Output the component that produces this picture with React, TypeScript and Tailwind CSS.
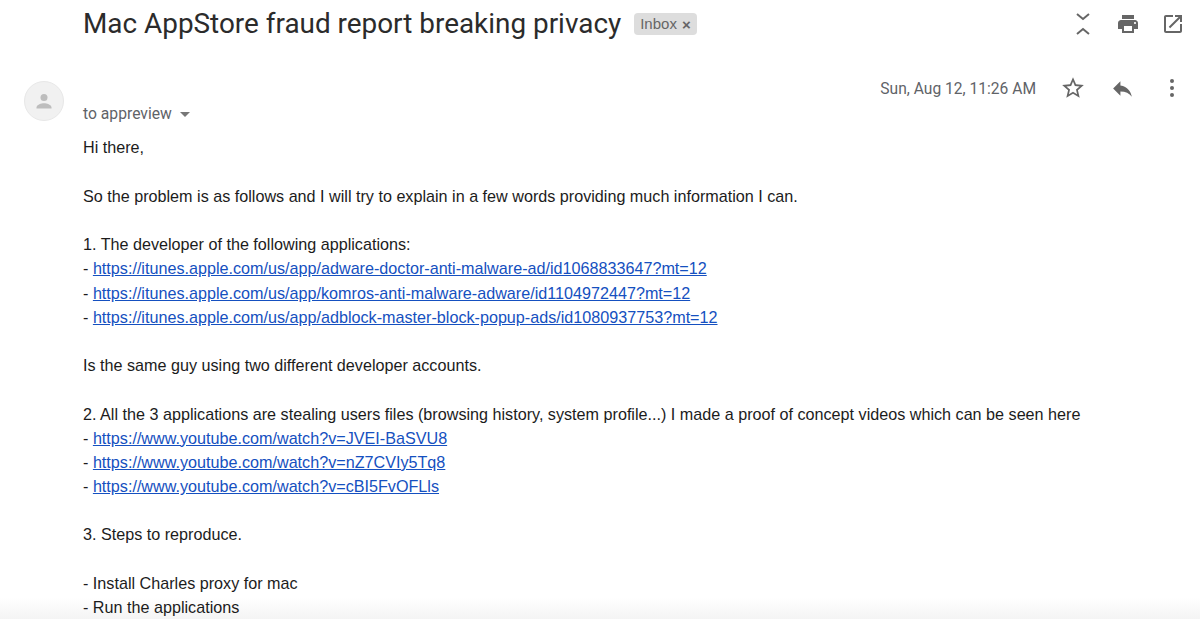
const bodyLines = [
  { text: 'Hi there,' },
  {},
  { text: 'So the problem is as follows and I will try to explain in a few words providing much information I can.' },
  {},
  { text: '1. The developer of the following applications:' },
  { link: 'https://itunes.apple.com/us/app/adware-doctor-anti-malware-ad/id1068833647?mt=12' },
  { link: 'https://itunes.apple.com/us/app/komros-anti-malware-adware/id1104972447?mt=12' },
  { link: 'https://itunes.apple.com/us/app/adblock-master-block-popup-ads/id1080937753?mt=12' },
  {},
  { text: 'Is the same guy using two different developer accounts.' },
  {},
  { text: '2. All the 3 applications are stealing users files (browsing history, system profile...) I made a proof of concept videos which can be seen here' },
  { link: 'https://www.youtube.com/watch?v=JVEI-BaSVU8' },
  { link: 'https://www.youtube.com/watch?v=nZ7CVIy5Tq8' },
  { link: 'https://www.youtube.com/watch?v=cBI5FvOFLls' },
  {},
  { text: '3. Steps to reproduce.' },
  {},
  { text: '- Install Charles proxy for mac' },
  { text: '- Run the applications' },
];

export default function App() {
  return (
    <div className="relative w-[1200px] h-[619px] overflow-hidden bg-white font-['Liberation_Sans',sans-serif] text-[#1c1c1c]">
      {/* fade at the bottom of the window, sits under the text */}
      <div className="absolute left-0 right-0 bottom-0 h-[22px] bg-gradient-to-b from-white to-[#f4f4f4]" />

      {/* subject row */}
      <div className="relative flex items-center h-[47px] pl-[83px] pr-[15px]">
        <h1 className="font-['Roboto',sans-serif] font-normal text-[27.9px] leading-[47px] text-[#2b2b2b]">
          Mac AppStore fraud report breaking privacy
        </h1>
        <span className="ml-[13px] mt-[1px] flex items-center h-[22px] px-[6px] rounded-[4px] bg-[#dddddd] text-[#666666] text-[15px]">
          Inbox
          <span className="ml-[5px] text-[15px] font-bold leading-none">×</span>
        </span>
        <div className="ml-auto flex items-center">
          <svg width="20" height="24" viewBox="0 0 20 24" fill="none" stroke="#666" strokeWidth="2" className="mr-[23px]">
            <path d="M4 2l6 5 6-5M4 22l6-5 6 5" />
          </svg>
          <svg width="24" height="24" viewBox="0 0 24 24" fill="#666" className="mr-[21px]">
            <path d="M19 8H5c-1.66 0-3 1.34-3 3v6h4v4h12v-4h4v-6c0-1.66-1.34-3-3-3zm-3 11H8v-5h8v5zm3-7c-.55 0-1-.45-1-1s.45-1 1-1 1 .45 1 1-.45 1-1 1zm-1-9H6v4h12V3z" />
          </svg>
          <svg width="24" height="24" viewBox="0 0 24 24" fill="#666">
            <path d="M19 19H5V5h7V3H5c-1.11 0-2 .9-2 2v14c0 1.1.89 2 2 2h14c1.1 0 2-.9 2-2v-7h-2v7zM14 3v2h3.59l-9.83 9.83 1.41 1.41L19 6.41V10h2V3h-7z" />
          </svg>
        </div>
      </div>

      {/* message */}
      <div className="relative flex pl-[24px] pt-[34px]">
        <div className="flex items-center justify-center w-[40px] h-[40px] rounded-full bg-[#f1f1f1] border border-[#e8e8e8] shrink-0">
          <svg width="24" height="24" viewBox="0 0 24 24" fill="#bdbdbd">
            <circle cx="12" cy="8.5" r="3.5" />
            <path d="M4.5 18.5c0-2.8 5-4.2 7.5-4.2s7.5 1.4 7.5 4.2v1h-15z" />
          </svg>
        </div>
        <div className="flex-1 ml-[19px]">
          <div className="flex items-center h-[14px] pr-[15px]">
            <div className="ml-auto flex items-center">
              <span className="font-['Roboto',sans-serif] text-[15.6px] text-[#5f6368] mr-[24px] mt-[4px]">Sun, Aug 12, 11:26 AM</span>
              <svg width="26" height="26" viewBox="0 0 24 24" fill="#666" className="mr-[24px]">
                <path d="M22 9.24l-7.19-.62L12 2 9.19 8.63 2 9.24l5.46 4.73L5.82 21 12 17.27 18.18 21l-1.63-7.03L22 9.24zM12 15.4l-3.76 2.27 1-4.28-3.32-2.88 4.38-.38L12 6.1l1.71 4.04 4.38.38-3.32 2.88 1 4.28L12 15.4z" />
              </svg>
              <svg width="25" height="25" viewBox="0 0 24 24" fill="#666" className="mr-[35px]">
                <path d="M10 9V5l-7 7 7 7v-4.1c5 0 8.5 1.6 11 5.1-1-5-4-10-11-11z" />
              </svg>
              <svg width="4" height="18" viewBox="0 0 4 18" fill="#666" className="mr-[11px]">
                <circle cx="2" cy="2" r="2" />
                <circle cx="2" cy="9" r="2" />
                <circle cx="2" cy="16" r="2" />
              </svg>
            </div>
          </div>
          <div className="flex items-center h-[24px] mt-[7px] font-['Roboto',sans-serif] text-[15.7px] text-[#5f6368]">
            to appreview
            <span className="ml-[8px] w-0 h-0 border-x-[5px] border-x-transparent border-t-[5px] border-t-[#777777]" />
          </div>
          <div className="mt-[9.4px] text-[16.17px] leading-[24.2px] whitespace-nowrap">
            {bodyLines.map((line, i) =>
              line.link ? (
                <div key={i}>
                  - <a className="text-[#1550c0] underline" href="#">{line.link}</a>
                </div>
              ) : (
                <div key={i} className="h-[24.2px]">{line.text}</div>
              ),
            )}
          </div>
        </div>
      </div>
    </div>
  );
}
